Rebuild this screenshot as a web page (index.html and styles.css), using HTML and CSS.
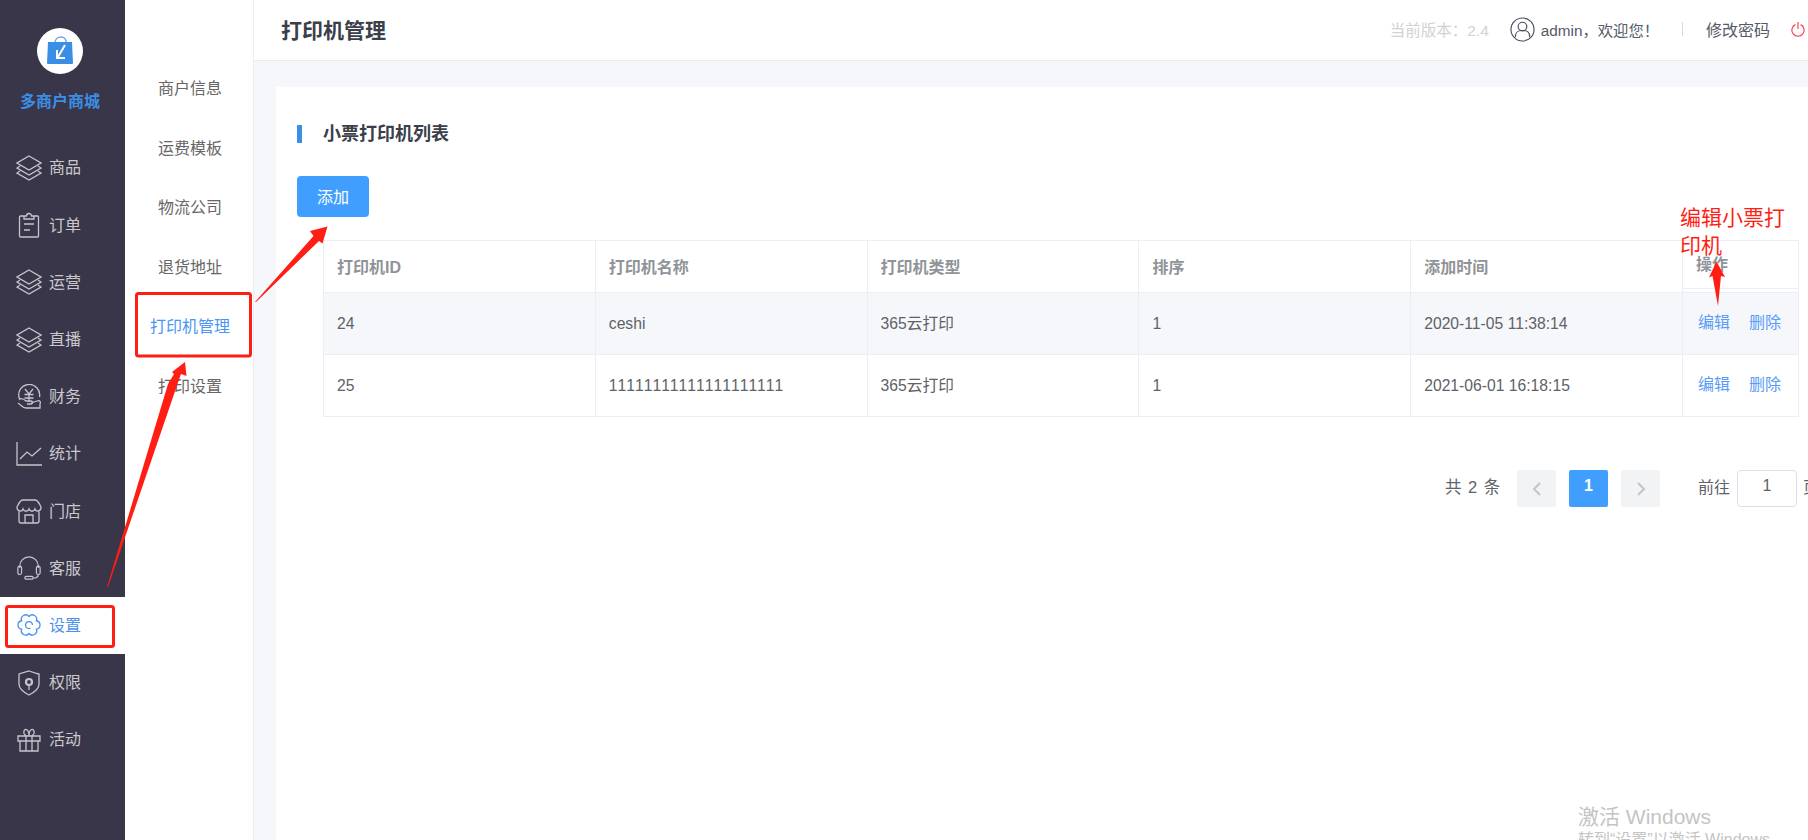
FILE: index.html
```html
<!DOCTYPE html>
<html lang="zh-CN">
<head>
<meta charset="utf-8">
<title>打印机管理</title>
<link rel="stylesheet" href="styles.css">
</head>
<body>
<svg class="defs" width="0" height="0" aria-hidden="true">
  <symbol id="i-layers" viewBox="0 0 26 26"><path d="M13 1 25 8 13 15 1 8Z"/><path d="M4 11 1 13 13 20 25 13 22 11"/><path d="M4 16 1 18 13 25 25 18 22 16"/></symbol>
</svg>
<div class="app">
  <aside class="rail">
    <div class="brand">
      <div class="logo">
        <svg viewBox="0 0 46 46" width="46" height="46">
          <path class="logo-handle" d="M18 15c0-4 3-6 6-6s6 2 5 7"/>
          <path class="logo-bag" d="M11 14h24l1 21a1 1 0 0 1-1 1H11a1 1 0 0 1-1-1Z"/>
          <path class="logo-arrow" d="M28 17 21 29M20 22v8h8"/>
        </svg>
      </div>
      <div class="brand-name">多商户商城</div>
    </div>
    <nav class="rail-nav">
      <a class="rail-item"><svg class="ri" viewBox="0 0 26 26"><use href="#i-layers"/></svg><span>商品</span></a>
      <a class="rail-item"><svg class="ri" viewBox="0 0 26 26"><path d="M8 4H4.500a1 1 0 0 0-1 1v19a1 1 0 0 0 1 1h17a1 1 0 0 0 1-1V5a1 1 0 0 0-1-1H18M8 7V4h2.500a2.500 2.500 0 0 1 5 0H18v3ZM8 12h10M8 18h6"/></svg><span>订单</span></a>
      <a class="rail-item"><svg class="ri" viewBox="0 0 26 26"><use href="#i-layers"/></svg><span>运营</span></a>
      <a class="rail-item"><svg class="ri" viewBox="0 0 26 26"><use href="#i-layers"/></svg><span>直播</span></a>
      <a class="rail-item"><svg class="ri" viewBox="0 0 26 26"><path d="M4 16A10.500 10.500 0 1 1 23.500 13M9 5l4 5 4-5M8.500 10.500h9M8.500 14h9M13 10.500v7.500M3 15c3-1 5 0 7 2h5c2 0 2 3 0 3h-4M15 19l6-2c3-1 4 1 3 3v4H10c-3 0-5-3-8-5"/></svg><span>财务</span></a>
      <a class="rail-item"><svg class="ri" viewBox="0 0 26 26"><path d="M1 1v23h25M4 18l7-7 5 4 9-8"/></svg><span>统计</span></a>
      <a class="rail-item"><svg class="ri" viewBox="0 0 26 26"><path d="M7 2h12c3 0 4 3 6 7 0 5-5 5-6 2-1 3-5 3-6 0-1 3-5 3-6 0-1 3-6 3-6-2 2-4 3-7 6-7ZM3 13v10a2 2 0 0 0 2 2h16a2 2 0 0 0 2-2V13M9 25V17h8v8"/></svg><span>门店</span></a>
      <a class="rail-item"><svg class="ri" viewBox="0 0 28 26"><path d="M4 13V11a10 10 0 0 1 20 0v2M2 13a2 2 0 0 1 4 0v5a2 2 0 0 1-4 0ZM22 13a2 2 0 0 1 4 0v5a2 2 0 0 1-4 0ZM24 20c0 3-3 4-6 4M11 22h6a1.500 1.500 0 0 1 0 3h-6a1.500 1.500 0 0 1 0-3Z"/></svg><span>客服</span></a>
      <a class="rail-item active"><svg class="ri" viewBox="0 0 26 26"><path d="M13 4.500A4.300 4.300 0 0 1 20.360 8.750 4.300 4.300 0 0 1 20.360 17.250 4.300 4.300 0 0 1 13 21.500 4.300 4.300 0 0 1 5.640 17.250 4.300 4.300 0 0 1 5.640 8.750 4.300 4.300 0 0 1 13 4.500Z"/><path d="M14.500 16.200A3.500 3.500 0 1 1 16.500 13"/></svg><span>设置</span></a>
      <a class="rail-item"><svg class="ri" viewBox="0 0 26 26"><path d="M13 1 21 3.500 23 4V14C23 20 17 23 13 25 9 23 3 20 3 14V4ZM13 15v5"/><circle class="key" cx="13" cy="12" r="3"/></svg><span>权限</span></a>
      <a class="rail-item"><svg class="ri" viewBox="0 0 26 26"><path d="M2 9h22v5H2ZM4 14v10h18V14M10 9v15M16 9v15M13 9C9 9 7 7 8 4s5-2 5 5c0-7 4-8 5-5s-1 5-5 5Z"/></svg><span>活动</span></a>
    </nav>
  </aside>
  <aside class="sub">
    <a class="sub-item">商户信息</a>
    <a class="sub-item">运费模板</a>
    <a class="sub-item">物流公司</a>
    <a class="sub-item">退货地址</a>
    <a class="sub-item current">打印机管理</a>
    <a class="sub-item">打印设置</a>
  </aside>
  <main class="main">
    <header class="top">
      <h1 class="top-title">打印机管理</h1>
      <div class="top-right">
        <span class="version">当前版本：2.4</span>
        <span class="user">
          <svg class="avatar" viewBox="0 0 26 26"><circle cx="13" cy="13" r="12"/><circle cx="13" cy="10" r="4.500"/><path d="M5.500 21c0-6 3-7 7.500-7s7.500 1 7.500 7"/></svg>
          admin，欢迎您！
        </span>
        <span class="sep"></span>
        <a class="pwd">修改密码</a>
        <svg class="power" viewBox="0 0 16 16"><path d="M5 3A7 7 0 1 0 11 3M8 0v8"/></svg>
      </div>
    </header>
    <div class="content">
      <section class="card">
        <h2 class="section-title">小票打印机列表</h2>
        <button class="btn-add" type="button">添加</button>
        <table class="grid">
          <thead>
            <tr><th>打印机ID</th><th>打印机名称</th><th>打印机类型</th><th>排序</th><th>添加时间</th><th class="ops-head">操作</th></tr>
          </thead>
          <tbody>
            <tr class="hover"><td>24</td><td>ceshi</td><td>365云打印</td><td>1</td><td>2020-11-05 11:38:14</td><td class="ops"><a>编辑</a><a>删除</a></td></tr>
            <tr><td>25</td><td class="nokern">11111111111111111111</td><td>365云打印</td><td>1</td><td>2021-06-01 16:18:15</td><td class="ops"><a>编辑</a><a>删除</a></td></tr>
          </tbody>
        </table>
        <div class="pager">
          <span class="total">共 2 条</span>
          <span class="pg"><svg viewBox="0 0 12 16" width="12" height="16"><path d="M9 2 3 8l6 6"/></svg></span>
          <span class="pg on">1</span>
          <span class="pg"><svg viewBox="0 0 12 16" width="12" height="16"><path d="M3 2l6 6-6 6"/></svg></span>
          <span class="goto">前往</span>
          <span class="pg-input">1</span>
          <span class="goto-end">页</span>
        </div>
      </section>
    </div>
  </main>
</div>
<div class="annot-layer">
  <svg class="annot" viewBox="0 0 1808 840" width="1808" height="840">
    <rect x="136.500" y="293.500" width="114" height="62.500" rx="2"/>
    <rect x="6.500" y="606.500" width="107" height="40" rx="2"/>
    <polygon points="107,587 108,587 177.500,384 181,374 186.500,376 185,362 172,372 174,374 168,384"/>
    <polygon points="255,302 256,302 319,241 322.500,243.500 327.500,226.500 310,231 313.500,236"/>
    <polygon points="1718,306 1712.500,276 1709,277.500 1716.500,261.500 1725,277 1721,276"/>
  </svg>
  <div class="annot-note">编辑小票打印机</div>
  <div class="watermark"><div class="wm-1">激活 Windows</div><div class="wm-2">转到“设置”以激活 Windows。</div></div>
</div>
</body>
</html>
```

FILE: styles.css
```css
* { box-sizing: border-box; }
html, body { margin: 0; height: 100%; overflow: hidden; }
body { font-family: "Liberation Sans", "Noto Sans CJK SC", sans-serif; background: #fff; color: #606266; }
a { color: inherit; text-decoration: none; }
.defs { position: absolute; }

.app { display: flex; height: 840px; width: 1808px; }

.rail { width: 125px; flex: none; background: #3a3649; display: flex; flex-direction: column; }
.brand { height: 139.400px; display: flex; flex-direction: column; align-items: center; padding: 28px 5px 0 0; }
.logo { width: 46px; height: 46px; border-radius: 50%; background: #fff; }
.logo svg { display: block; }
.logo-bag { fill: #3a8ee6; }
.logo-handle { fill: none; stroke: #6aa5ea; stroke-width: 1.500; }
.logo-arrow { fill: none; stroke: #fff; stroke-width: 2; }
.brand-name { margin-top: 17px; font-size: 16px; line-height: 22px; font-weight: 700; color: #3a8ee6; }
.rail-item { height: 57.200px; display: flex; align-items: center; padding-left: 16px; gap: 7px; font-size: 16px; color: #c9c9cd; }
.rail-item span { margin-bottom: 3px; }
.ri { width: 26px; height: 26px; flex: none; fill: none; stroke: #c4c6cc; stroke-width: 1.300; }
.ri .key { stroke-width: 2.200; }
.defs path { fill: none; stroke: #c4c6cc; stroke-width: 1.300; }
.rail-item.active { background: #fff; color: #4a90ee; }
.rail-item.active .ri { stroke: #4a90ee; }

.sub { width: 129px; flex: none; background: #fff; border-right: 1px solid #eceef2; padding: 57.500px 0 0 2px; display: flex; flex-direction: column; }
.sub-item { height: 59.500px; display: flex; align-items: center; justify-content: center; font-size: 16px; color: #666; }
.sub-item.current { color: #4a96f5; }

.main { flex: 1; min-width: 0; display: flex; flex-direction: column; background: #f6f7fb; }
.top { height: 61px; flex: none; background: #fff; border-bottom: 1px solid #ebebeb; display: flex; align-items: center; justify-content: space-between; padding: 0 0 2px 27px; }
.top-title { margin: 0; font-size: 21px; font-weight: 700; color: #3b3f4a; }
.top-right { display: flex; align-items: center; font-size: 16px; color: #555a66; margin-right: 3px; }
.version { color: #d2d2d2; font-size: 15.500px; margin: 0 21px 1px 0; }
.user { display: flex; align-items: center; gap: 6px; font-size: 15.300px; }
.avatar { width: 25px; height: 25px; fill: none; stroke: #4a5060; stroke-width: 1.200; }
.sep { width: 1px; height: 14px; background: #d8d8d8; margin: 0 23px 0 23px; }
.power { width: 14px; height: 16px; margin-left: 21px; fill: none; stroke: #f5404a; stroke-width: 1.300; }

.content { flex: 1; min-height: 0; padding: 26px 0 0 22px; }
.card { height: 100%; background: #fff; padding: 38px 10px 0 21px; }
.section-title { margin: 0; height: 18px; border-left: 5px solid #3a8ee6; padding-left: 21px; font-size: 18px; line-height: 18px; font-weight: 700; color: #3b3f4a; }
.btn-add { display: block; margin-top: 33px; padding: 0 0 2px; width: 72px; height: 41px; border: 0; border-radius: 4px; background: #409eff; color: #fff; font: inherit; font-size: 16px; }
.grid { margin: 23px 0 0 26px; width: 1476px; height: 176px; border-collapse: collapse; table-layout: fixed; font-size: 15.700px; line-height: 20px; }
.grid th, .grid td { border: 1px solid #ebeef5; padding: 0 13px; text-align: left; }
.grid th { height: 52px; font-size: 16px; font-weight: 700; color: #909399; padding-top: 2px; }
.grid td { height: 62px; }
.grid .nokern { font-kerning: none; }
.grid th:last-child, .grid td:last-child { width: 116px; }
.grid .hover td { background: #f5f7fa; }
.grid .ops-head { box-shadow: inset 0 -3px 0 #fff, inset 0 -4px 0 #ebeef5; padding: 0 13px 4px; }
.grid td.ops { font-size: 16px; color: #5a9cf8; white-space: nowrap; padding: 0 0 1px 15px; }
.ops a { margin-right: 19px; }

.pager { display: flex; align-items: center; height: 37px; margin-top: 53px; padding-left: 1148px; font-size: 16px; width: 1600px; color: #606266; }
.total { width: 72px; font-size: 16.500px; word-spacing: 2px; margin-bottom: 6px; }
.pg { width: 39px; height: 37px; margin-right: 13px; border-radius: 2px; background: #f2f3f5; display: flex; align-items: center; justify-content: center; font-weight: 700; }
.pg svg { fill: none; stroke: #c0c4cc; stroke-width: 2; }
.pg.on { background: #409eff; color: #fff; padding-bottom: 5px; }
.goto { margin: 0 0 6px 25px; }
.pg-input { width: 60px; height: 37px; margin-left: 7px; padding-bottom: 5px; border: 1px solid #dcdfe6; border-radius: 4px; display: flex; align-items: center; justify-content: center; }
.goto-end { margin: 0 0 6px 6px; }

.annot-layer { position: absolute; left: 0; top: 0; width: 1808px; height: 840px; overflow: hidden; pointer-events: none; }
.annot { position: absolute; left: 0; top: 0; }
.annot rect { fill: none; stroke: #ff1e14; stroke-width: 3; }
.annot polygon { fill: #ff1e14; }
.annot-note { position: absolute; left: 1680px; top: 204px; width: 112px; font-size: 21px; line-height: 28px; color: #ff1e14; }
.watermark { position: absolute; left: 1578px; top: 802px; color: #c4c4c4; white-space: nowrap; }
.wm-1 { font-size: 21px; line-height: 30px; }
.wm-2 { font-size: 16px; line-height: 18px; margin-top: -1px; }
```
